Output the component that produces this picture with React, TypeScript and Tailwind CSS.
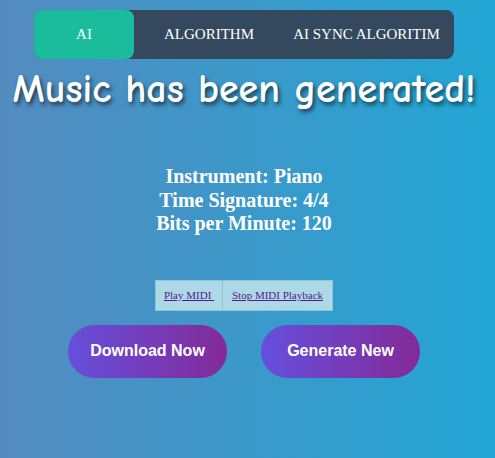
import React from "react";

export default function App() {
  return (
    <div className="w-[495px] h-[458px] overflow-hidden bg-[linear-gradient(to_right,#548bbf,#22a6d4)] pr-[7px]">
      <div className="flex flex-col items-center">
        <div className="mt-[10px] w-[420px] h-[49px] rounded-lg bg-[#34495e] flex items-stretch font-['Liberation_Serif',serif] text-[15px] text-white">
          <div className="w-[100px] rounded-lg bg-[#1abc9c] flex items-center justify-center">AI</div>
          <div className="w-[150px] flex items-center justify-center">ALGORITHM</div>
          <div className="flex-1 flex items-center justify-center pr-[5px]">AI SYNC ALGORITIM</div>
        </div>
        <h1 className="mt-[6px] text-[40px] leading-[48px] font-bold text-white font-['Comic_Sans_MS','Comic_Neue',cursive] [text-shadow:2px_3px_4px_rgba(0,0,0,0.6)] whitespace-nowrap">
          Music has been generated!
        </h1>
        <div className="mt-[52px] flex flex-col items-center font-['Liberation_Serif',serif] font-bold text-white text-[20px] leading-[23.5px]">
          <div>Instrument: Piano</div>
          <div>Time Signature: 4/4</div>
          <div>Bits per Minute: 120</div>
        </div>
        <div className="mt-[44px] flex h-[31px] border border-[#8cc4d8] bg-[#add8e6] font-['Liberation_Serif',serif] text-[11px] text-[#551a8b]">
          <a className="w-[67px] flex items-center justify-center underline border-r border-[#8cc4d8]">Play MIDI&nbsp;</a>
          <a className="w-[109px] flex items-center justify-center underline">Stop MIDI Playback</a>
        </div>
        <div className="mt-[14px] flex gap-[34px]">
          <button className="w-[159px] h-[53px] rounded-full bg-[linear-gradient(to_right,#654fdc,#832a98)] text-white font-bold text-[16px] font-['Liberation_Sans',sans-serif]">Download Now</button>
          <button className="w-[159px] h-[53px] rounded-full bg-[linear-gradient(to_right,#654fdc,#832a98)] text-white font-bold text-[16px] font-['Liberation_Sans',sans-serif]">Generate New</button>
        </div>
      </div>
    </div>
  );
}
